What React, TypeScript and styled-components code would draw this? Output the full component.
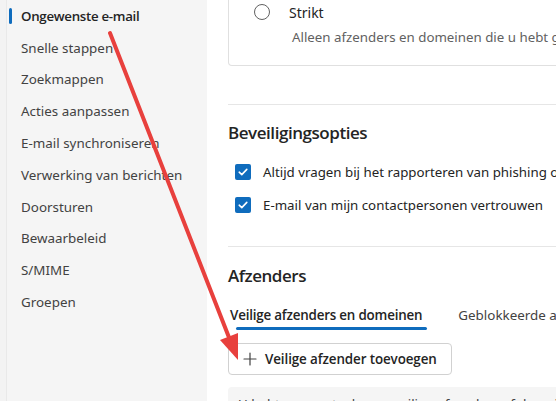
import React from 'react';
import styled, { createGlobalStyle } from 'styled-components';

const GlobalStyle = createGlobalStyle`
  html, body {
    margin: 0;
    padding: 0;
    background: #ffffff;
  }
  body {
    font-family: 'Noto Sans', 'Open Sans', Arial, sans-serif;
    color: #242424;
  }
`;

const strong = `'Open Sans', 'Noto Sans', Arial, sans-serif`;

const Page = styled.div`
  position: relative;
  width: 556px;
  height: 401px;
  display: flex;
  overflow: hidden;
  background: #f3f3f3;
`;

const Sidebar = styled.nav`
  width: 200px;
  margin-left: 6px;
  border-left: 1px solid #e9e9e9;
  background: #f5f5f5;
  display: flex;
  flex-direction: column;
`;

const NavItem = styled.div<{ active?: boolean }>`
  position: relative;
  height: 31.8px;
  display: flex;
  align-items: center;
  padding-left: 14px;
  font-family: ${p => (p.active ? strong : 'inherit')};
  font-size: ${p => (p.active ? '13.3px' : '13.4px')};
  font-weight: ${p => (p.active ? 600 : 400)};
  letter-spacing: ${p => (p.active ? '-0.3px' : '0')};
  color: ${p => (p.active ? '#242424' : '#424242')};
  white-space: nowrap;

  &::before {
    content: '';
    display: ${p => (p.active ? 'block' : 'none')};
    position: absolute;
    left: 2px;
    top: 8px;
    width: 3px;
    height: 16px;
    border-radius: 2px;
    background: #0f6cbd;
  }
`;

const Main = styled.main`
  flex: 1;
  background: #ffffff;
  padding-left: 21px;
  overflow: hidden;
`;

const Content = styled.div`
  width: 600px;
  display: flex;
  flex-direction: column;
`;

const Card = styled.div`
  border: 1px solid #e0e0e0;
  border-top: none;
  border-radius: 0 0 4px 4px;
  padding: 0 0 17px 24px;
`;

const OptionRow = styled.div`
  height: 24px;
  display: flex;
  align-items: center;
  gap: 19px;
  font-size: 14px;
`;

const Radio = styled.span`
  width: 14px;
  height: 14px;
  border-radius: 50%;
  border: 1px solid #616161;
  margin-left: 1px;
`;

const OptionDesc = styled.div`
  margin: 2px 0 0 39px;
  font-size: 13.3px;
  color: #616161;
  line-height: 22px;
  white-space: nowrap;
`;

const Divider = styled.div<{ top: number }>`
  height: 1px;
  background: #e6e6e6;
  margin-top: ${p => p.top}px;
`;

const Heading = styled.h2<{ top: number }>`
  margin: ${p => p.top}px 0 0;
  font-family: ${strong};
  font-size: 17px;
  font-weight: 600;
  letter-spacing: -0.45px;
  line-height: 24px;
  color: #242424;
`;

const CheckList = styled.div`
  display: flex;
  flex-direction: column;
  gap: 9px;
  margin-top: 15px;
`;

const CheckRow = styled.label`
  height: 24px;
  display: flex;
  align-items: center;
  gap: 12px;
  padding-left: 7px;
  font-size: 13.3px;
  color: #242424;
  white-space: nowrap;
`;

const CheckBox = styled.span`
  width: 16px;
  height: 16px;
  border-radius: 2px;
  background: #0f6cbd;
  display: flex;
  align-items: center;
  justify-content: center;
`;

const Tabs = styled.div`
  display: flex;
  gap: 36px;
  margin-top: 13px;
  padding-left: 2px;
`;

const Tab = styled.div<{ active?: boolean }>`
  position: relative;
  height: 28px;
  display: flex;
  align-items: center;
  font-family: ${p => (p.active ? strong : 'inherit')};
  font-size: 13.4px;
  font-weight: ${p => (p.active ? 600 : 400)};
  letter-spacing: ${p => (p.active ? '-0.2px' : '0')};
  color: ${p => (p.active ? '#242424' : '#424242')};
  white-space: nowrap;

  &::after {
    content: '';
    display: ${p => (p.active ? 'block' : 'none')};
    position: absolute;
    left: 6px;
    right: -5px;
    bottom: -1px;
    height: 3px;
    border-radius: 2px;
    background: #0f6cbd;
  }
`;

const AddButton = styled.button`
  align-self: flex-start;
  margin-top: 14px;
  height: 32px;
  width: 224px;
  display: flex;
  align-items: center;
  gap: 8px;
  padding: 0 0 0 14px;
  border: 1px solid #d1d1d1;
  border-radius: 4px;
  background: #ffffff;
  font-family: ${strong};
  font-size: 13.4px;
  font-weight: 600;
  letter-spacing: -0.1px;
  color: #242424;
  white-space: nowrap;
`;

const InfoBox = styled.div`
  margin-top: 12px;
  height: 40px;
  border-radius: 4px;
  background: #f5f5f5;
  padding: 8px 10px;
  font-size: 13.3px;
  line-height: 18px;
  color: #424242;
  white-space: nowrap;
`;

const Annotation = styled.svg`
  position: absolute;
  left: 0;
  top: 0;
  pointer-events: none;
`;

const navItems = [
  'Ongewenste e-mail',
  'Snelle stappen',
  'Zoekmappen',
  'Acties aanpassen',
  'E-mail synchroniseren',
  'Verwerking van berichten',
  'Doorsturen',
  'Bewaarbeleid',
  'S/MIME',
  'Groepen',
];

const Check = () => (
  <svg width="10" height="8" viewBox="0 0 10 8">
    <path d="M1.2 4.2 L3.8 6.6 L8.8 1.4" fill="none" stroke="#fff" strokeWidth="1.6" strokeLinecap="round" strokeLinejoin="round" />
  </svg>
);

const Plus = () => (
  <svg width="14" height="14" viewBox="0 0 14 14">
    <path d="M7 1 V13 M1 7 H13" stroke="#424242" strokeWidth="1.2" strokeLinecap="round" />
  </svg>
);

const App: React.FC = () => {
  return (
    <>
      <GlobalStyle />
      <Page>
        <Sidebar>
          {navItems.map((item, i) => (
            <NavItem key={item} active={i === 0}>
              {item}
            </NavItem>
          ))}
        </Sidebar>
        <Main>
          <Content>
            <Card>
              <OptionRow>
                <Radio />
                Strikt
              </OptionRow>
              <OptionDesc>
                Alleen afzenders en domeinen die u hebt gemarkeerd als veilig, worden in uw Postvak IN bezorgd
              </OptionDesc>
            </Card>
            <Divider top={38} />
            <Heading top={16}>Beveiligingsopties</Heading>
            <CheckList>
              <CheckRow>
                <CheckBox>
                  <Check />
                </CheckBox>
                Altijd vragen bij het rapporteren van phishing of ongewenste e-mail
              </CheckRow>
              <CheckRow>
                <CheckBox>
                  <Check />
                </CheckBox>
                E-mail van mijn contactpersonen vertrouwen
              </CheckRow>
            </CheckList>
            <Divider top={29} />
            <Heading top={17}>Afzenders</Heading>
            <Tabs>
              <Tab active>Veilige afzenders en domeinen</Tab>
              <Tab>Geblokkeerde afzenders en domeinen</Tab>
            </Tabs>
            <AddButton>
              <Plus />
              Veilige afzender toevoegen
            </AddButton>
            <InfoBox>U hebt momenteel geen veilige afzenders of domeinen toegevoegd.</InfoBox>
          </Content>
        </Main>
        <Annotation width="556" height="401" viewBox="0 0 556 401">
          <line x1="110" y1="33" x2="230" y2="340" stroke="#e8403d" strokeWidth="4" strokeLinecap="round" />
          <polygon points="238,360 220,340 238,333" fill="#e8403d" />
        </Annotation>
      </Page>
    </>
  );
};

export default App;
